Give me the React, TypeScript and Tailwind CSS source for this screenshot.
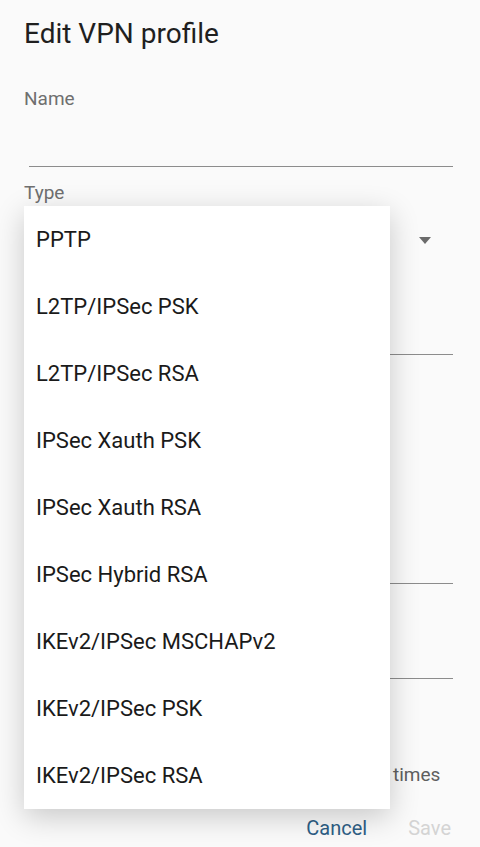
import React from "react";

const items = [
  "PPTP",
  "L2TP/IPSec PSK",
  "L2TP/IPSec RSA",
  "IPSec Xauth PSK",
  "IPSec Xauth RSA",
  "IPSec Hybrid RSA",
  "IKEv2/IPSec MSCHAPv2",
  "IKEv2/IPSec PSK",
  "IKEv2/IPSec RSA",
];

export default function App() {
  return (
    <div
      className="relative w-[480px] h-[847px] overflow-hidden bg-[#fafafa]"
      style={{ fontFamily: "Roboto, 'Liberation Sans', sans-serif" }}
    >
      <div className="flex flex-col">
        <div className="pl-6 pt-[17px] text-[28px] leading-[34px] text-[#1f1f1f]">
          Edit VPN profile
        </div>
        <div className="pl-6 mt-[36px] text-[19px] leading-[24px] text-[#6f6f6f]">Name</div>
        <div className="ml-[29px] mr-[27px] h-[56px] border-b-[1.5px] border-[#8c8c8c]" />
        <div className="pl-6 mt-[14px] text-[19px] leading-[24px] text-[#6f6f6f]">Type</div>
        <div className="flex h-[70px] items-center justify-end pr-[49px]">
          <svg width="12" height="7" viewBox="0 0 12 7">
            <path d="M0 0 L12 0 L6 7 Z" fill="#6b6b6b" />
          </svg>
        </div>
        <div className="ml-[29px] mr-[27px] h-[80px] border-b-[1.5px] border-[#8c8c8c]" />
        <div className="ml-[29px] mr-[27px] h-[229px] border-b-[1.5px] border-[#8c8c8c]" />
        <div className="ml-[29px] mr-[27px] h-[95px] border-b-[1.5px] border-[#8c8c8c]" />
        <div className="flex h-[108px] items-end pl-[393px] text-[19px] leading-[24px] text-[#5f5f5f]">
          times
        </div>
        <div className="mt-[15px] flex h-[52px] items-center justify-end gap-[41px] pr-[29px] text-[20px]">
          <span className="text-[#2e5f86]">Cancel</span>
          <span className="text-[#d4d4d4]">Save</span>
        </div>
      </div>

      <div className="absolute left-[24px] top-[206px] w-[366px] bg-white shadow-[0_8px_28px_rgba(0,0,0,0.2)] flex flex-col">
        {items.map((t) => (
          <div
            key={t}
            className="h-[67px] flex items-center pl-3 text-[22px] text-[#1a1a1a]"
          >
            {t}
          </div>
        ))}
      </div>
    </div>
  );
}
